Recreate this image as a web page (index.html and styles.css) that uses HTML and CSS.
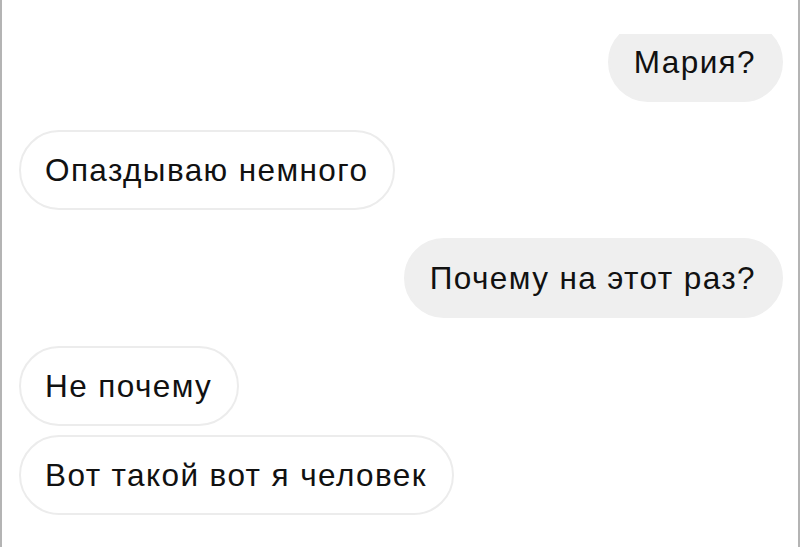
FILE: index.html
```html
<!DOCTYPE html>
<html lang="ru">
<head>
    <meta charset="UTF-8">
    <meta name="viewport" content="width=device-width, initial-scale=1.0">
    <title>Чат</title>
    <link rel="stylesheet" href="styles.css">
</head>
<body>
    <div class="screen">
        <div class="chat">
            <div class="message out first">Мария?</div>
            <div class="group">
                <div class="message in">Опаздываю немного</div>
            </div>
            <div class="group">
                <div class="message out">Почему на этот раз?</div>
            </div>
            <div class="group">
                <div class="message in">Не почему</div>
                <div class="message in">Вот такой вот я человек</div>
            </div>
        </div>
    </div>
</body>
</html>
```

FILE: styles.css
```css
* {
    margin: 0;
    padding: 0;
    box-sizing: border-box;
}

body {
    font-family: 'Liberation Sans', Arial, sans-serif;
    background-color: #fff;
}

.screen {
    height: 547px;
    border-left: 2px solid #b4b4b4;
    border-right: 2px solid #b4b4b4;
    padding-top: 34px;
}

/* top of the first bubble is cut off by the screenshot */
.chat {
    height: 100%;
    overflow: hidden;
    display: flex;
    flex-direction: column;
    padding: 0 15px 0 17px;
}

.group {
    display: flex;
    flex-direction: column;
    gap: 9px;
    margin-top: 28px;
}

.message {
    height: 80px;
    line-height: 76px;
    padding: 0 25px 0 24px;
    font-size: 31.5px;
    letter-spacing: 1.4px;
    color: #111;
    border-radius: 40px;
    border: 2px solid transparent;
    white-space: nowrap;
}

.message.first {
    margin-top: -12px;
}

.message.in {
    align-self: flex-start;
    background: #fff;
    border-color: #ececec;
}

.message.out {
    align-self: flex-end;
    background: #efefef;
    border-color: #efefef;
}
```
